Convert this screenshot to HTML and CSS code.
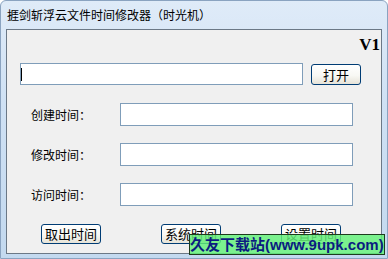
FILE: index.html
```html
<!DOCTYPE html>
<html lang="zh-CN">
<head>
    <meta charset="UTF-8">
    <title>捱剑斩浮云文件时间修改器（时光机）</title>
    <link rel="stylesheet" href="styles.css">
</head>
<body>
    <div class="window">
        <div class="titlebar">捱剑斩浮云文件时间修改器（时光机）</div>
        <div class="client">
            <div class="version">V1</div>

            <!-- file path -->
            <div class="path-row">
                <div class="path-box">
                    <input type="text" class="textbox path-input">
                    <span class="caret"></span>
                </div>
                <button type="button" class="btn btn-open">打开</button>
            </div>

            <!-- time fields -->
            <div class="field-row">
                <label class="field-label">创建时间：</label>
                <input type="text" class="textbox field-input">
            </div>
            <div class="field-row">
                <label class="field-label">修改时间：</label>
                <input type="text" class="textbox field-input">
            </div>
            <div class="field-row">
                <label class="field-label">访问时间：</label>
                <input type="text" class="textbox field-input">
            </div>

            <div class="button-row">
                <button type="button" class="btn btn-action">取出时间</button>
                <button type="button" class="btn btn-action">系统时间</button>
                <button type="button" class="btn btn-action">设置时间</button>
            </div>
        </div>

        <div class="watermark">久友下载站(www.9upk.com)</div>
    </div>
</body>
</html>
```

FILE: styles.css
```css
body {
    margin: 0;
    padding: 0;
    background: #ffffff;
    font-family: "Noto Sans CJK SC", "DejaVu Sans", sans-serif;
    font-size: 12px;
}
.window {
    position: relative;
    width: 388px;
    height: 259px;
    box-sizing: border-box;
    border: 1px solid #8aa3c0;
    border-radius: 6px 6px 0 0;
    padding: 0 5px 4px 5px;
    background: linear-gradient(to bottom, #dfebf8 0%, #cfe1f4 40%, #c3d9ef 100%);
}
.titlebar {
    height: 28px;
    line-height: 28px;
    padding-left: 1px;
    color: #000;
    font-size: 12px;
    white-space: nowrap;
}
.client {
    height: 225px;
    box-sizing: border-box;
    border: 1px solid #6b7886;
    background: #f0f0f0;
}
.version {
    height: 33px;
    box-sizing: border-box;
    padding: 5px 1px 0 0;
    text-align: right;
    font-family: "Liberation Serif", serif;
    font-weight: bold;
    font-size: 17px;
    line-height: 20px;
    color: #000;
}
.path-row {
    display: flex;
    align-items: flex-start;
    padding-left: 13px;
    height: 22px;
}
.path-box {
    position: relative;
}
.textbox {
    display: block;
    box-sizing: border-box;
    margin: 0;
    padding: 0 3px;
    border: 1px solid #7f9db9;
    background: #fff;
    font-family: inherit;
    font-size: 12px;
}
.path-input {
    width: 283px;
    height: 22px;
}
.caret {
    position: absolute;
    left: 1px;
    top: 5px;
    width: 1px;
    height: 13px;
    background: #000;
}
.btn {
    box-sizing: border-box;
    margin: 0;
    padding: 0;
    border: 1px solid #003c74;
    border-radius: 3px;
    background: linear-gradient(to bottom, #ffffff 0%, #f8f8f4 55%, #e6e3d8 100%);
    font-family: inherit;
    font-size: 12px;
    color: #000;
    line-height: 18px;
}
.btn-open {
    width: 50px;
    height: 21px;
    margin: 1px 0 0 8px;
    font-size: 13px;
}
.field-row {
    display: flex;
    align-items: center;
    margin-top: 17px;
    padding-left: 24px;
    height: 23px;
}
.path-row + .field-row {
    margin-top: 18px;
}
.field-label {
    width: 89px;
    color: #000;
}
.field-input {
    width: 233px;
    height: 23px;
}
.button-row {
    display: flex;
    gap: 60px;
    margin-top: 18px;
    padding-left: 34px;
}
.btn-action {
    width: 60px;
    height: 20px;
    font-size: 13px;
}
.watermark {
    position: absolute;
    left: 188px;
    top: 233px;
    width: 196px;
    height: 21px;
    box-sizing: border-box;
    border: 1px solid #1d3b1d;
    background: rgba(96, 240, 120, 0.82);
    color: #0b1c80;
    font-weight: bold;
    font-size: 15px;
    line-height: 19px;
    white-space: nowrap;
    overflow: hidden;
    font-family: "Liberation Sans", "Noto Sans CJK SC", sans-serif;
}
```
